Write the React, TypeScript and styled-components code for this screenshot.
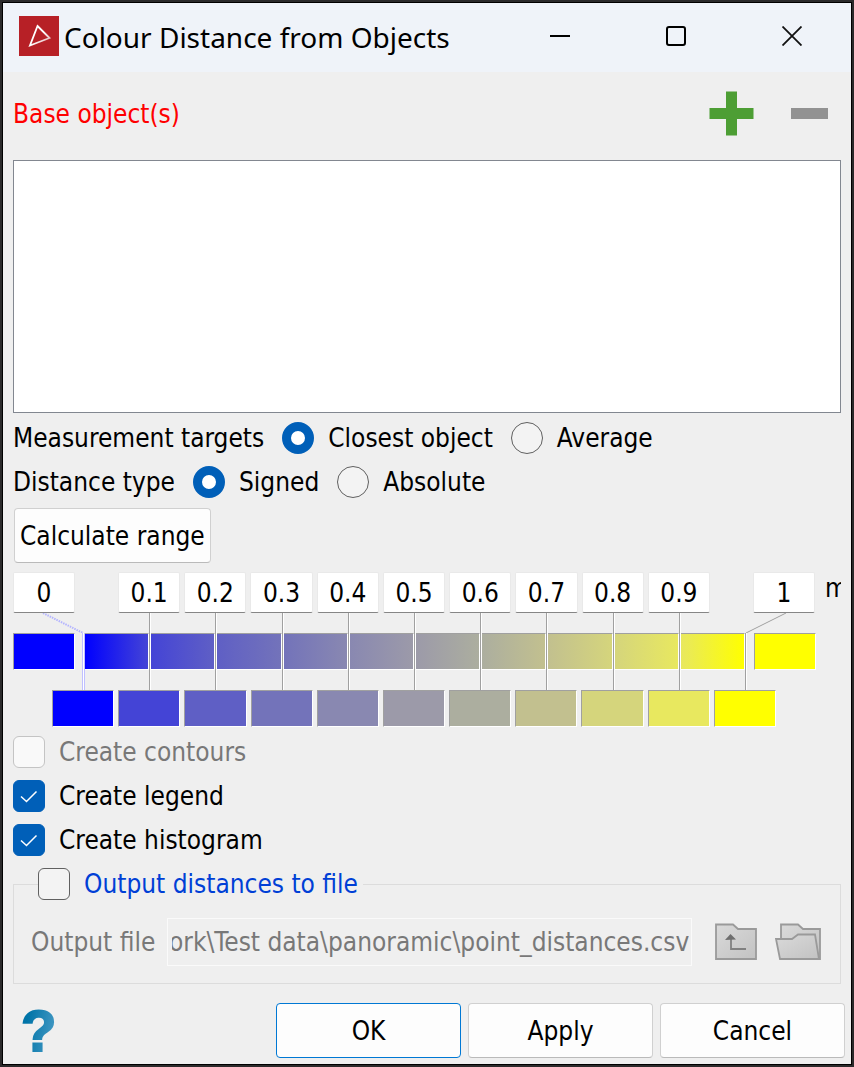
import React, { useLayoutEffect, useRef, useState } from "react";
import styled, { createGlobalStyle, css } from "styled-components";

const accent = "#005fb8";
const uiFont = '"DejaVu Sans Condensed", "DejaVu Sans", sans-serif';

const GlobalStyle = createGlobalStyle`
  *, *::before, *::after { box-sizing: border-box; }
  body {
    margin: 0;
    background: #2b2a2b;
    color: #000;
    font-family: ${uiFont};
    font-size: 26px;
    line-height: 32px;
  }
  button, input { font: inherit; color: inherit; margin: 0; padding: 0; }
  svg { display: block; }
`;

const Desktop = styled.div`
  min-height: 100vh;
  padding: 2px;
  display: flex;
`;

const Window = styled.main`
  flex: 1;
  min-width: 0;
  display: flex;
  flex-direction: column;
  border: 1px solid #000;
  background: #efefef;
`;

const TitleBar = styled.header`
  display: flex;
  align-items: center;
  height: 69px;
  padding: 0 1px 4px 16px;
  background: #eff3f9;
`;

const Title = styled.h1`
  flex: 1;
  margin: 0 0 0 5px;
  padding-top: 2px;
  font: 400 28px/36px "Noto Sans", sans-serif;
  white-space: nowrap;
`;

const IconButton = styled.button<{ $width?: number }>`
  display: flex;
  align-items: center;
  justify-content: center;
  flex: none;
  width: ${(p) => (p.$width ? `${p.$width}px` : "auto")};
  align-self: stretch;
  border: 0;
  background: none;
`;

const Content = styled.div`
  flex: 1;
  display: flex;
  flex-direction: column;
  padding: 0 10px;
`;

const ListHeader = styled.div`
  display: flex;
  align-items: center;
  height: 88px;
  padding: 0 13px 5px 0;
  gap: 37px;
`;

const ListTitle = styled.h2`
  flex: 1;
  margin: 0;
  font: inherit;
  color: #ff0000;
`;

const ObjectList = styled.div`
  flex: 1;
  min-height: 160px;
  border: 1px solid #828790;
  background: #fff;
`;

const Choices = styled.div`
  padding-top: 3px;
`;

const ChoiceRow = styled.div`
  display: flex;
  align-items: center;
  height: 44px;
  gap: 18px;
`;

const Option = styled.label<{ $muted?: boolean }>`
  display: flex;
  align-items: center;
  gap: 14px;
  white-space: nowrap;
  color: ${(p) => (p.$muted ? "#787878" : "inherit")};
`;

const control = css`
  appearance: none;
  flex: none;
  width: 32px;
  height: 32px;
  border: 1px solid #606060;
  background: #f3f3f3;
  &:disabled {
    border: 1px solid #c4c4c4;
    background: #f9f9f9;
  }
`;

const Radio = styled.input.attrs({ type: "radio" })`
  ${control}
  border-radius: 50%;
  &:checked {
    border: 9px solid ${accent};
    background: #fff;
  }
`;

const Check = styled.input.attrs({ type: "checkbox" })`
  ${control}
  display: block;
  border-radius: 6px;
  &:checked {
    border-color: ${accent};
    background: ${accent};
  }
`;

const CheckFrame = styled.span`
  position: relative;
  flex: none;
  svg {
    position: absolute;
    inset: 0;
    pointer-events: none;
  }
`;

const PushButton = styled.button<{ $primary?: boolean; $width?: number }>`
  height: 55px;
  width: ${(p) => (p.$width ? `${p.$width}px` : "auto")};
  padding: 0 5px;
  border: 1px solid ${(p) => (p.$primary ? "#0078d4" : "#d0d0d0")};
  border-bottom-color: ${(p) => (p.$primary ? "#0078d4" : "#bababa")};
  border-radius: 4px;
  background: #fdfdfd;
  white-space: nowrap;
`;

const RangeButton = styled(PushButton)`
  align-self: flex-start;
  margin: 4px 0 9px 1px;
`;

const ValueRow = styled.div`
  display: flex;
  width: 100%;
`;

const InnerValues = styled.div`
  flex: 1;
  display: grid;
  grid-template-columns: repeat(9, minmax(0, 1fr));
  gap: 4px;
  margin: 0 43px;
`;

const ValueInput = styled.input`
  width: 100%;
  height: 41px;
  border: 1px solid #e9e9e9;
  border-bottom-color: #868686;
  border-radius: 2px;
  background: #fff;
  text-align: center;
`;

const EndValue = styled(ValueInput)`
  flex: none;
  width: 62px;
`;

const Unit = styled.span`
  flex: none;
  width: 16px;
  margin-left: 10px;
  overflow: hidden;
`;

const bevel = css`
  border: 1px solid;
  border-color: #a0a0a0 #fff #fff #a0a0a0;
`;

const Swatch = styled.button<{ $color: string }>`
  ${bevel}
  width: 100%;
  height: 37px;
  background: ${(p) => p.$color};
`;

const EndSwatch = styled(Swatch)`
  flex: none;
  width: 62px;
`;

const RampRow = styled.div`
  display: flex;
  align-items: center;
  height: 77px;
  padding-right: 25px;
`;

const Ramp = styled.div`
  flex: 1;
  display: flex;
  align-items: center;
  align-self: stretch;
  margin: 0 7px;
`;

const Segment = styled.div<{ $from: string; $to: string }>`
  flex: 1;
  height: 37px;
  border: solid;
  border-width: 1px 1px 1px 0;
  border-color: #a0a0a0 #fff #fff;
  background: linear-gradient(to right, ${(p) => p.$from}, ${(p) => p.$to});
`;

const Tick = styled.span`
  flex: none;
  align-self: stretch;
  width: 2px;
  border-left: 1px solid #a0a0a0;
  background: #fff;
`;

const StartTick = styled.span`
  position: relative;
  flex: none;
  align-self: stretch;
  width: 3px;
  margin-top: 20px;
  border: solid #c0c0ff;
  border-width: 0 1px;
  background: #fff;
`;

const EndTick = styled(Tick)`
  position: relative;
  margin-top: 20px;
`;

const Leader = styled.svg<{ $side: "left" | "right" }>`
  position: absolute;
  bottom: 100%;
  ${(p) => (p.$side === "left" ? "right: 0;" : "left: 0;")}
`;

const SwatchRow = styled.div`
  display: grid;
  grid-template-columns: repeat(11, minmax(0, 1fr));
  gap: 4px;
  padding: 0 65px 0 39px;
`;

const OptionList = styled.div`
  display: flex;
  flex-direction: column;
  align-items: flex-start;
  gap: 12px;
  padding: 9px 0 12px;
`;

const Group = styled.fieldset`
  min-width: 0;
  margin: 0;
  padding: 18px 16px 17px 17px;
  border: 1px solid #dcdcdc;
`;

const Legend = styled.legend`
  margin-left: 7px;
  padding: 0 5px 0 0;
  color: #003fd6;
`;

const FileRow = styled.div`
  display: flex;
  align-items: center;
  color: #787878;
`;

const FileInput = styled.input`
  flex: 1;
  min-width: 0;
  height: 48px;
  margin: 0 23px 0 12px;
  border: 1px solid #fafafa;
  background: #efefef;
  padding: 0 2px 0 4px;
`;

const FileButtons = styled.div`
  display: flex;
  gap: 18px;
  padding-right: 3px;
`;

const Footer = styled.footer`
  display: flex;
  gap: 7px;
  padding: 19px 6px 6px 18px;
`;

const HelpButton = styled.button`
  height: 55px;
  margin-right: auto;
  border: 0;
  background: linear-gradient(100deg, #0074a8 20%, #4a9cc6 95%);
  background-clip: text;
  color: transparent;
  font: 700 58px/55px "Liberation Sans", sans-serif;
  -webkit-text-stroke: 2px transparent;
`;

const stops = [
  "#0000ff", "#4444d6", "#5f5fc5", "#7373ba", "#8988b1", "#9c9aa9",
  "#acae9f", "#c2c08f", "#d5d57c", "#e8e85f", "#ffff00",
];
const innerValues = ["0.1", "0.2", "0.3", "0.4", "0.5", "0.6", "0.7", "0.8", "0.9"];

function CheckOption(props: { label: string; checked?: boolean; disabled?: boolean }) {
  const [on, setOn] = useState(!!props.checked);
  return (
    <Option $muted={props.disabled}>
      <CheckFrame>
        <Check checked={on} disabled={props.disabled} onChange={() => setOn(!on)} />
        {on && (
          <svg width="32" height="32" viewBox="0 0 32 32" fill="none" stroke="#fff" strokeWidth="1.5">
            <path d="M8 16.5 13.5 21.5 23.5 11.5" />
          </svg>
        )}
      </CheckFrame>
      {props.label}
    </Option>
  );
}

function RadioRow(props: { title: string; name: string; options: string[] }) {
  return (
    <ChoiceRow role="radiogroup" aria-label={props.title}>
      <span>{props.title}</span>
      {props.options.map((o, i) => (
        <Option key={o}>
          <Radio name={props.name} defaultChecked={i === 0} />
          {o}
        </Option>
      ))}
    </ChoiceRow>
  );
}

function FolderGradient({ id }: { id: string }) {
  return (
    <defs>
      <linearGradient id={id} x1="0" y1="0" x2="1" y2="1">
        <stop offset="0" stopColor="#dadada" />
        <stop offset="1" stopColor="#c2c2c2" />
      </linearGradient>
    </defs>
  );
}

function PathField() {
  const ref = useRef<HTMLInputElement>(null);
  useLayoutEffect(() => {
    if (ref.current) ref.current.scrollLeft = ref.current.scrollWidth;
  }, []);
  return (
    <FileInput
      id="output-file"
      ref={ref}
      disabled
      defaultValue={"C:\\Work\\Test data\\panoramic\\point_distances.csv"}
    />
  );
}

export default function App() {
  return (
    <Desktop>
      <GlobalStyle />
      <Window>
        <TitleBar>
          <svg width="40" height="40" viewBox="0 0 40 40">
            <defs>
              <linearGradient id="mark" x1="0" y1="0" x2="1" y2="1">
                <stop offset="0.5" stopColor="#fff" />
                <stop offset="1" stopColor="#d9a0a2" />
              </linearGradient>
            </defs>
            <rect width="40" height="40" fill="#b72026" />
            <path d="M18.5 10 30.5 22 11 29.5Z" fill="none" stroke="url(#mark)" strokeWidth="1.8" />
          </svg>
          <Title>Colour Distance from Objects</Title>
          <IconButton $width={116} aria-label="Minimise">
            <svg width="20" height="20" viewBox="0 0 20 20">
              <path d="M0 10h20" stroke="#000" strokeWidth="2" />
            </svg>
          </IconButton>
          <IconButton $width={116} aria-label="Maximise">
            <svg width="20" height="20" viewBox="0 0 20 20">
              <rect x="1" y="1" width="18" height="18" rx="2" fill="none" stroke="#000" strokeWidth="2" />
            </svg>
          </IconButton>
          <IconButton $width={116} aria-label="Close">
            <svg width="20" height="20" viewBox="0 0 20 20">
              <path d="M0.5 0.5l19 19M19.5 0.5l-19 19" stroke="#111" strokeWidth="1.8" />
            </svg>
          </IconButton>
        </TitleBar>

        <Content>
          <ListHeader>
            <ListTitle>Base object(s)</ListTitle>
            <IconButton aria-label="Add object">
              <svg width="45" height="45" viewBox="0 0 45 45">
                <path d="M17 0.5h11V17h16.5v11H28v16.5H17V28H0.5V17H17z" fill="#4d9e34" />
              </svg>
            </IconButton>
            <IconButton aria-label="Remove object">
              <svg width="37" height="11" viewBox="0 0 37 11">
                <path d="M0 0h37v11H0z" fill="#929292" />
              </svg>
            </IconButton>
          </ListHeader>
          <ObjectList role="listbox" aria-label="Base object(s)" />

          <Choices>
            <RadioRow title="Measurement targets" name="targets" options={["Closest object", "Average"]} />
            <RadioRow title="Distance type" name="type" options={["Signed", "Absolute"]} />
          </Choices>
          <RangeButton>Calculate range</RangeButton>

          <ValueRow>
            <EndValue aria-label="Minimum" defaultValue="0" />
            <InnerValues>
              {innerValues.map((v) => (
                <ValueInput key={v} aria-label={`Stop ${v}`} defaultValue={v} />
              ))}
            </InnerValues>
            <EndValue aria-label="Maximum" defaultValue="1" />
            <Unit>m</Unit>
          </ValueRow>

          <RampRow>
            <EndSwatch $color={stops[0]} aria-label="Colour below minimum" />
            <Ramp>
              <StartTick>
                <Leader $side="left" width="42" height="20" viewBox="0 0 42 20">
                  <path d="M1 0 41 20" stroke="#b4b4ff" strokeWidth="2" strokeDasharray="1.5 1" />
                </Leader>
              </StartTick>
              {stops.slice(1).map((c, i) => (
                <React.Fragment key={c}>
                  {i > 0 && <Tick />}
                  <Segment $from={stops[i]} $to={c} />
                </React.Fragment>
              ))}
              <EndTick>
                <Leader $side="right" width="40" height="20" viewBox="0 0 40 20">
                  <path d="M0 20 40 0" stroke="#a0a0a0" strokeWidth="1" />
                </Leader>
              </EndTick>
            </Ramp>
            <EndSwatch $color={stops[10]} aria-label="Colour above maximum" />
          </RampRow>

          <SwatchRow>
            {stops.map((c, i) => (
              <Swatch key={c} $color={c} aria-label={`Colour ${i}`} />
            ))}
          </SwatchRow>

          <OptionList>
            <CheckOption label="Create contours" disabled />
            <CheckOption label="Create legend" checked />
            <CheckOption label="Create histogram" checked />
          </OptionList>

          <Group>
            <Legend>
              <CheckOption label="Output distances to file" />
            </Legend>
            <FileRow>
              <label htmlFor="output-file">Output file</label>
              <PathField />
              <FileButtons>
                <IconButton aria-label="Parent folder" disabled>
                  <svg width="42" height="38" viewBox="0 0 42 38">
                    <FolderGradient id="up" />
                    <path
                      d="M1 1.5H18L23 6H41V36H1Z"
                      fill="url(#up)"
                      stroke="#9a9a9a"
                      strokeWidth="1.8"
                    />
                    <path d="M16 13V26H31" fill="none" stroke="#808080" strokeWidth="1.8" />
                    <path d="M10 17 15.5 11 21 16.5Z" fill="#6e6e6e" />
                  </svg>
                </IconButton>
                <IconButton aria-label="Browse" disabled>
                  <svg width="46" height="38" viewBox="0 0 46 38">
                    <FolderGradient id="open" />
                    <g fill="url(#open)" stroke="#9a9a9a" strokeWidth="1.8">
                      <path d="M6 1.5H23L28 6H45V36H6Z" />
                      <path d="M1 16H17L23 11.5H40L44 36H5Z" />
                    </g>
                  </svg>
                </IconButton>
              </FileButtons>
            </FileRow>
          </Group>
        </Content>

        <Footer>
          <HelpButton aria-label="Help">?</HelpButton>
          <PushButton $primary $width={185}>OK</PushButton>
          <PushButton $width={185}>Apply</PushButton>
          <PushButton $width={185}>Cancel</PushButton>
        </Footer>
      </Window>
    </Desktop>
  );
}
